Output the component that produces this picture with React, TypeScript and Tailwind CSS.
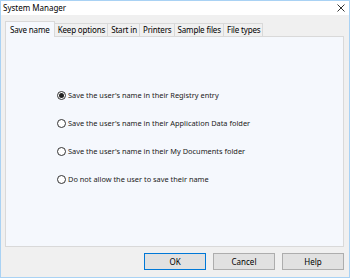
import React from "react";

const tabs = ["Save name", "Keep options", "Start in", "Printers", "Sample files", "File types"];

const options = [
  "Save the user's name in their Registry entry",
  "Save the user's name in their Application Data folder",
  "Save the user's name in their My Documents folder",
  "Do not allow the user to save their name",
];

const Radio = ({ checked }: { checked: boolean }) => (
  <div className="w-[9px] h-[9px] rounded-full border border-[#333] bg-white flex items-center justify-center shrink-0">
    {checked && <div className="w-[5px] h-[5px] rounded-full bg-[#222]" />}
  </div>
);

export default function App() {
  return (
    <div
      className="w-[350px] h-[278px] bg-[#f0f0f0] border border-[#a9d2f4] flex flex-col text-[8px] text-black leading-none"
      style={{ fontFamily: '"Noto Sans", "Open Sans", sans-serif' }}
    >
      <div className="h-[14px] bg-white flex items-center justify-between pl-[2px] pr-[4px] shrink-0">
        <span className="text-[8px]">System Manager</span>
        <svg width="8" height="8" viewBox="0 0 8 8">
          <path d="M0.5 0.5 L7.5 7.5 M7.5 0.5 L0.5 7.5" stroke="#333" strokeWidth="1" />
        </svg>
      </div>

      <div className="flex flex-col pl-[4px] pr-[5px] pt-[6px] flex-1">
        <div className="flex items-end h-[15px] tracking-[-0.15px]">
          {tabs.map((t, i) =>
            i === 0 ? (
              <div
                key={t}
                className="h-[16px] px-[4px] flex items-center bg-[#f5f8fd] border border-b-0 border-[#d9d9d9] relative z-10 -mb-px"
              >
                {t}
              </div>
            ) : (
              <div
                key={t}
                className="h-[13px] pl-[3px] pr-[2px] flex items-center bg-[#f0f0f0] border border-l-0 border-b-0 border-[#d9d9d9]"
              >
                {t}
              </div>
            )
          )}
        </div>
        <div className="h-[211px] bg-[#f5f8fd] border border-[#d9d9d9] flex flex-col pl-[51px] pt-[54px] gap-[19px]">
          {options.map((o, i) => (
            <div key={o} className="flex items-center gap-[2px] h-[9px]">
              <Radio checked={i === 0} />
              <span className="text-[#222] text-[7.4px]">{o}</span>
            </div>
          ))}
        </div>
        <div className="flex justify-end gap-[7px] pt-[6px]">
          {["OK", "Cancel", "Help"].map((b, i) => (
            <div
              key={b}
              className={`w-[62px] h-[17px] flex items-center justify-center bg-[#e1e1e1] border ${
                i === 0 ? "border-[#0078d7]" : "border-[#adadad]"
              }`}
            >
              {b}
            </div>
          ))}
        </div>
      </div>
    </div>
  );
}
